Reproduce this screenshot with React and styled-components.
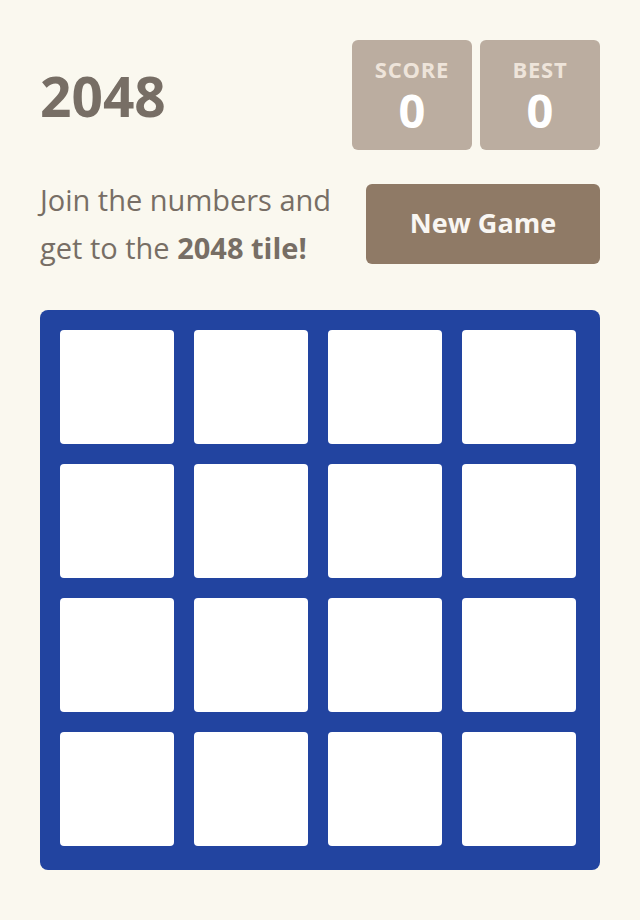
import React from 'react'
import styled, { createGlobalStyle } from 'styled-components'

const GlobalStyle = createGlobalStyle`
  html, body {
    margin: 0;
    padding: 0;
    background: #faf8ef;
    font-family: "Open Sans", "Noto Sans", sans-serif;
    color: #776e65;
  }
`

const Container = styled.div`
  width: 560px;
  margin: 0 auto;
  padding-top: 40px;
`

const Header = styled.div`
  display: flex;
  justify-content: space-between;
  align-items: center;
  height: 110px;
`

const Title = styled.h1`
  margin: 0;
  font-size: 55px;
  font-weight: 700;
  color: #776e65;
  line-height: 1;
`

const Scores = styled.div`
  display: flex;
  gap: 8px;
`

const ScoreBox = styled.div`
  width: 120px;
  height: 110px;
  background: #bbada0;
  border-radius: 6px;
  display: flex;
  flex-direction: column;
  align-items: center;
  justify-content: center;
  gap: 8px;
`

const ScoreLabel = styled.div`
  font-size: 22px;
  font-weight: 700;
  letter-spacing: 0.8px;
  color: #eee4da;
  line-height: 22px;
`

const ScoreValue = styled.div`
  font-size: 47px;
  font-weight: 700;
  color: #ffffff;
  line-height: 44px;
`

const Intro = styled.div`
  display: flex;
  justify-content: space-between;
  align-items: center;
  margin-top: 26px;
`

const Text = styled.p`
  margin: 0;
  font-size: 29px;
  line-height: 48px;
  color: #776e65;

  strong {
    font-weight: 700;
  }
`

const NewGame = styled.button`
  width: 234px;
  height: 80px;
  border: none;
  border-radius: 6px;
  background: #8f7a66;
  color: #f9f6f2;
  font-family: inherit;
  font-size: 27px;
  font-weight: 700;
  padding: 0 0 4px;
  cursor: pointer;
`

const Board = styled.div`
  margin-top: 38px;
  width: 560px;
  height: 560px;
  box-sizing: border-box;
  padding: 20px 24px 24px 20px;
  background: #2244a0;
  border-radius: 8px;
  display: grid;
  grid-template-columns: repeat(4, 114px);
  grid-template-rows: repeat(4, 114px);
  gap: 20px;
`

const Cell = styled.div`
  background: #ffffff;
  border-radius: 4px;
`

const App = () => {
  return (
    <>
      <GlobalStyle />
      <Container>
        <Header>
          <Title>2048</Title>
          <Scores>
            <ScoreBox>
              <ScoreLabel>SCORE</ScoreLabel>
              <ScoreValue>0</ScoreValue>
            </ScoreBox>
            <ScoreBox>
              <ScoreLabel>BEST</ScoreLabel>
              <ScoreValue>0</ScoreValue>
            </ScoreBox>
          </Scores>
        </Header>
        <Intro>
          <Text>
            Join the numbers and
            <br />
            get to the <strong>2048 tile!</strong>
          </Text>
          <NewGame>New Game</NewGame>
        </Intro>
        <Board>
          {Array.from({ length: 16 }).map((_, i) => (
            <Cell key={i} />
          ))}
        </Board>
      </Container>
    </>
  )
}

export default App
